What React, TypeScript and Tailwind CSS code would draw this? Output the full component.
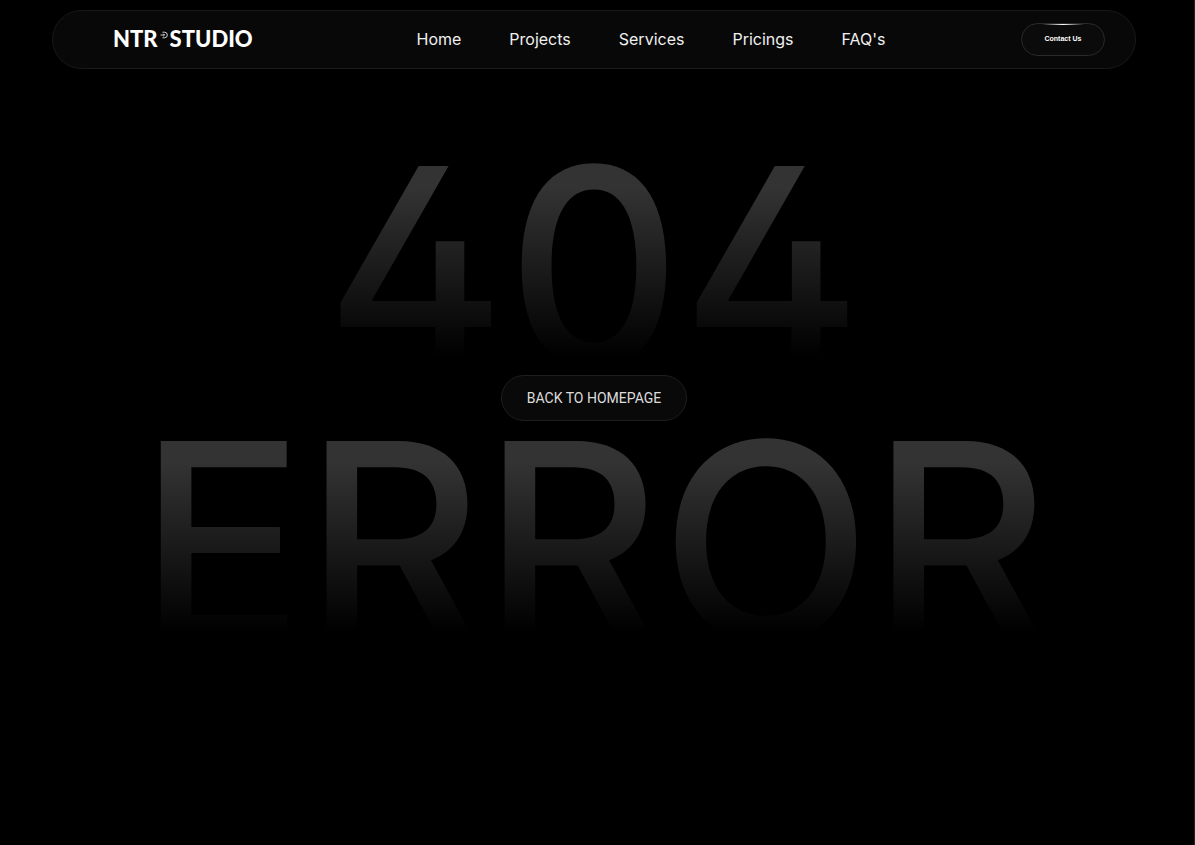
const navLinks = [
  { label: 'Home', href: '#home' },
  { label: 'Projects', href: '#projects' },
  { label: 'Services', href: '#services' },
  { label: 'Pricings', href: '#pricings' },
  { label: "FAQ's", href: '#faqs' },
];

const bigTextClass =
  "bg-linear-to-b from-[#333333] from-14% to-transparent to-91% bg-clip-text text-transparent text-[23vw] leading-[0.8] font-medium whitespace-nowrap [font-feature-settings:'cv02','tnum']";

function Logo() {
  return (
    <a
      href="#home"
      aria-label="NTR Studio"
      className="flex w-[168px] items-center pb-0.5 font-['Lato',sans-serif] text-[22px] leading-6 font-black text-white"
    >
      <span>NTR</span>
      <svg viewBox="0 0 8 8" className="mx-0.5 mb-2 size-2 shrink-0" fill="none" stroke="currentColor" strokeWidth="0.8" aria-hidden="true">
        <path d="M2.5 1.2h2a2.8 2.8 0 0 1 0 5.6h-2M0.5 4h4M3.3 2.8 4.5 4 3.3 5.2" />
      </svg>
      <span>STUDIO</span>
    </a>
  );
}

function Navbar() {
  return (
    <header className="px-[52px] pt-[10px]">
      <div className="flex h-[59px] items-center justify-between rounded-full border border-[#191919] bg-[#080808] pr-[30px] pl-[60px]">
        <Logo />
        <nav className="flex items-center gap-12 pb-0.5">
          {navLinks.map((link) => (
            <a key={link.label} href={link.href} className="text-base leading-6 text-[#f0f0f0]">
              {link.label}
            </a>
          ))}
        </nav>
        <button
          type="button"
          className="relative h-[33px] w-[84px] cursor-pointer rounded-full border border-[#2a2a2a] bg-[#0b0b0b] font-['Liberation_Sans',sans-serif] text-[7px] font-bold text-white"
        >
          <span className="absolute inset-x-5 top-0 h-px bg-linear-to-r from-transparent via-white to-transparent" />
          Contact Us
        </button>
      </div>
    </header>
  );
}

export default function App() {
  return (
    <div className="min-h-screen overflow-hidden border-r border-[#242424] bg-black pr-[6px] font-['Inter',sans-serif]">
      <Navbar />
      <main className="flex flex-col items-center pt-[88px]">
        <h1 className={bigTextClass}>404</h1>
        <a
          href="#home"
          className="-mt-0.5 mb-[11px] flex h-[46px] items-center rounded-full border border-[#1e1e1e] bg-[#090909] px-[25px] font-['Roboto',sans-serif] text-sm text-[#dddddd]"
        >
          BACK TO HOMEPAGE
        </a>
        <p className={bigTextClass}>ERROR</p>
      </main>
    </div>
  );
}
